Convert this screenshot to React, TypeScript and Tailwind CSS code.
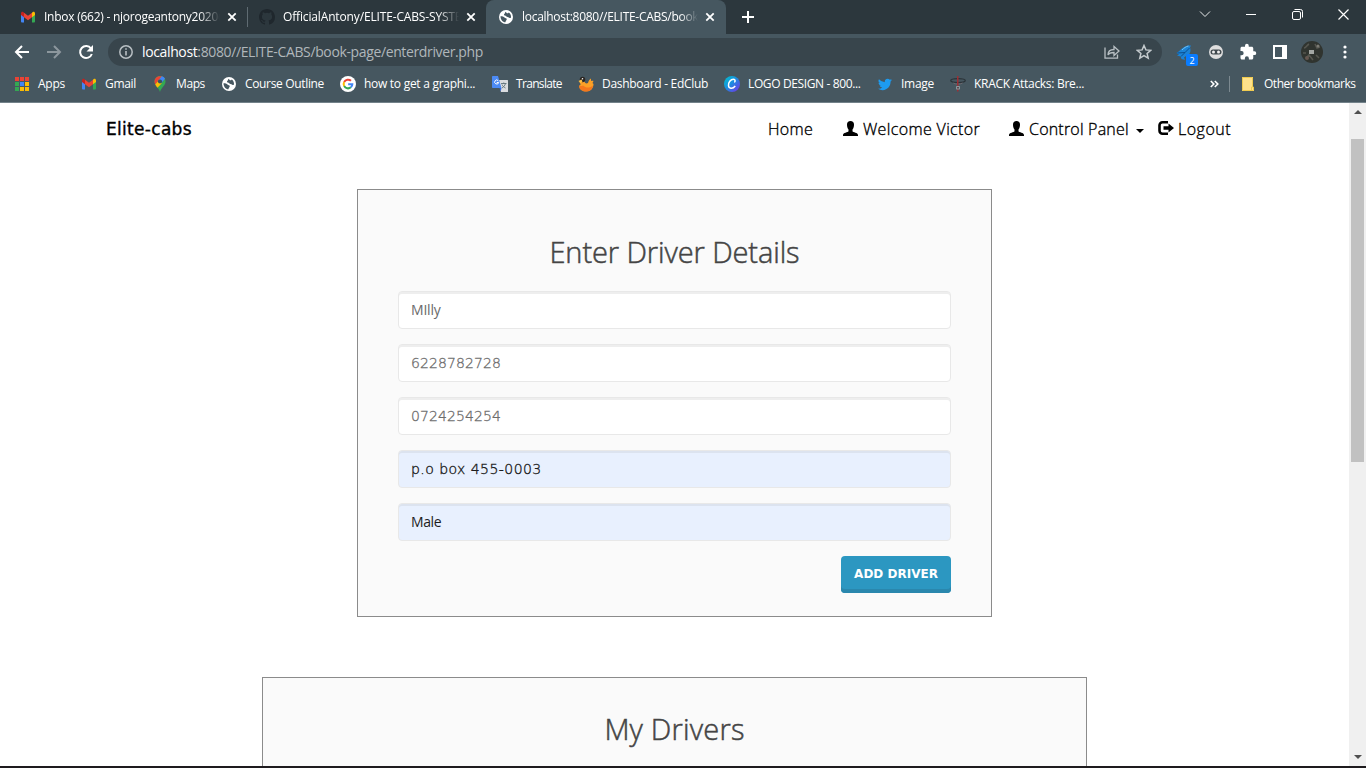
import type { ReactNode } from "react";

function GmailIcon() {
  return (
    <svg width="14" height="12" viewBox="0 0 28 22" className="shrink-0">
      <path d="M0 4v15.500C0 21 1 22 2.300 22H6V8z" fill="#4285f4" />
      <path d="M28 4v15.500c0 1.500-1 2.500-2.300 2.500H22V8z" fill="#34a853" />
      <path d="M6 2.500v9L14 17.500l8-6v-9l-8 6z" fill="#ea4335" />
      <path d="M0 4v3l6 4.500v-9L4.500 1.200C2.600-.3 0 1 0 4z" fill="#c5221f" />
      <path d="M28 4v3l-6 4.500v-9l1.500-1.300C25.400-.3 28 1 28 4z" fill="#fbbc04" />
    </svg>
  );
}

function GlobeIcon() {
  return (
    <svg width="14" height="14" viewBox="0 0 28 28" className="shrink-0">
      <circle cx="14" cy="14" r="14" fill="#fff" />
      <path d="M3 12.500c4 .2 6.500.5 8 2.500 1.500 1.800 4.500.8 4.500 3.500 0 2.200-2.500 2.500-2.500 6C7 24.500 3 19 3 12.500z" fill="#465760" />
      <path d="M13 3.500c-1 1.500-.5 3-2 4s-1.500 3 .5 3.500c3 .5 3 2.500 5.500 3s4 2.500 6.500 2c1.500-4-.5-9-4-11-1 1.500-2.500 2-3.500 1.500S14.500 4.500 13 3.500z" fill="#465760" />
    </svg>
  );
}

function GithubIcon() {
  return (
    <svg width="16" height="16" viewBox="0 0 16 16" className="shrink-0">
      <path fill="#1f272d" d="M8 0C3.580 0 0 3.580 0 8c0 3.540 2.290 6.530 5.470 7.590.4.070.55-.17.55-.38 0-.19-.01-.82-.01-1.490-2.010.37-2.530-.49-2.690-.94-.09-.23-.48-.94-.82-1.130-.28-.15-.68-.52-.01-.53.63-.01 1.080.58 1.230.82.72 1.210 1.870.87 2.330.66.07-.52.28-.87.51-1.070-1.780-.2-3.640-.89-3.640-3.950 0-.87.31-1.590.82-2.150-.08-.2-.36-1.020.08-2.120 0 0 .67-.21 2.200.82a7.600 7.600 0 0 1 4 0c1.530-1.040 2.200-.82 2.200-.82.44 1.100.16 1.920.08 2.120.51.56.82 1.270.82 2.150 0 3.070-1.870 3.750-3.650 3.950.29.25.54.73.54 1.480 0 1.070-.01 1.930-.01 2.200 0 .21.15.46.55.38A8.010 8.010 0 0 0 16 8c0-4.420-3.580-8-8-8z" />
    </svg>
  );
}

function CloseMark() {
  return (
    <svg width="10" height="10" viewBox="0 0 10 10" className="shrink-0">
      <path d="M1.300 1.300l7.400 7.400M8.700 1.300L1.300 8.700" stroke="#fff" strokeWidth="1.800" />
    </svg>
  );
}

function AppsIcon() {
  const colors = ["#ea4335", "#ea4335", "#ea4335", "#34a853", "#4285f4", "#fbbc04", "#34a853", "#fbbc04", "#fbbc04"];
  return (
    <svg width="14" height="14" viewBox="0 0 14 14" className="shrink-0">
      {colors.map((c, i) => (
        <rect key={i} x={(i % 3) * 5} y={Math.floor(i / 3) * 5} width="4" height="4" fill={c} />
      ))}
    </svg>
  );
}

function MapsIcon() {
  return (
    <svg width="12" height="16" viewBox="0 0 24 32" className="shrink-0">
      <path d="M12 0C5.500 0 1 5 1 11c0 9 8.500 11 11 21 2.500-10 11-12 11-21C23 5 18.500 0 12 0z" fill="#34a853" />
      <path d="M2.500 17L16 1C13 0 6.500-.5 3.500 4 0 8.500.5 13 2.500 17z" fill="#ea4335" />
      <path d="M2.500 17L8.500 9.500l7 5L7 23.500C5.500 21.500 3.500 19.500 2.500 17z" fill="#fbbc04" />
      <path d="M15.500 .6L8.500 9.500l6.500 4 7-8C20.500 3 18 1.200 15.500.6z" fill="#4285f4" />
      <circle cx="12" cy="11" r="4.200" fill="#3b5160" />
    </svg>
  );
}

function GoogleIcon() {
  return (
    <svg width="16" height="16" viewBox="0 0 48 48" className="shrink-0">
      <circle cx="24" cy="24" r="24" fill="#fff" />
      <g fill="none" strokeWidth="6">
        <path d="M33 14.500A13 13 0 0 0 12.500 18" stroke="#ea4335" />
        <path d="M12.500 18a13 13 0 0 0 0 12" stroke="#fbbc04" />
        <path d="M12.500 30A13 13 0 0 0 32.500 34" stroke="#34a853" />
        <path d="M32.500 34a13 13 0 0 0 4.500-9.500H24.500" stroke="#4285f4" />
      </g>
    </svg>
  );
}

function TranslateIcon() {
  return (
    <svg width="16" height="16" viewBox="0 0 32 32" className="shrink-0">
      <path d="M12 8h19a1 1 0 0 1 1 1v22a1 1 0 0 1-1 1H18z" fill="#dadce0" />
      <path d="M18 15h11M23.500 13v2M27 15c-1 4-4 7-7 9M20 17c1 3 4 6 7 7" stroke="#5f7078" strokeWidth="1.800" fill="none" />
      <path d="M1.500 0H12l7 24H1.500A1.500 1.500 0 0 1 0 22.500v-21A1.500 1.500 0 0 1 1.500 0z" fill="#4c8bf5" />
      <path d="M15 24h4l-1.500 7z" fill="#3367d6" />
      <path d="M12.500 9.500a4 4 0 1 0 .8 3.500H9.500" stroke="#fff" strokeWidth="2" fill="none" />
    </svg>
  );
}

function EdClubIcon() {
  return (
    <svg width="16" height="16" viewBox="0 0 32 32" className="shrink-0">
      <path d="M3 12c2-3 8-3 10-1 1 4 4 5 7 3 1-4 3-8 6-9l0 5c2-1 4-1 5 0l-2 4 2 2c0 9-6 15-14 15S2 27 2 19c2 0 3-1 3-3z" fill="#fba026" />
      <path d="M2 19c3 2 6 1 8 0 5 5 13 6 20 0-1 7-6 12-13 12S2 27 2 19z" fill="#f26a1b" opacity=".75" />
      <circle cx="9" cy="7" r="5.500" fill="#2a2522" />
      <path d="M1 10l6-3 2 4-4 3z" fill="#ffc042" />
      <circle cx="9" cy="5.500" r="1.500" fill="#fff" />
    </svg>
  );
}

function CanvaIcon() {
  return (
    <svg width="16" height="16" viewBox="0 0 32 32" className="shrink-0">
      <defs>
        <linearGradient id="canva" x1="0" y1="0" x2="1" y2="1">
          <stop offset="0" stopColor="#00c4cc" />
          <stop offset=".45" stopColor="#198fe0" />
          <stop offset="1" stopColor="#7d2ae8" />
        </linearGradient>
      </defs>
      <circle cx="16" cy="16" r="16" fill="url(#canva)" />
      <path d="M20.500 12.500c2.500-1 2.500-6-1.500-6C13 6.500 8.500 13 9 19c.5 6.500 8 8 13.500 1" stroke="#fff" strokeWidth="3" fill="none" />
    </svg>
  );
}

function TwitterIcon() {
  return (
    <svg width="14" height="13" viewBox="0 0 24 20" className="shrink-0">
      <path fill="#1d9bf0" d="M24 2.400a10 10 0 0 1-2.800.8A5 5 0 0 0 23.300.5a10 10 0 0 1-3.100 1.200A4.900 4.900 0 0 0 11.800 6.200 14 14 0 0 1 1.700 1a4.900 4.900 0 0 0 1.500 6.600 5 5 0 0 1-2.200-.6c0 2.300 1.600 4.300 3.900 4.800a5 5 0 0 1-2.200.1 4.900 4.900 0 0 0 4.600 3.400A10 10 0 0 1 0 17.300a14 14 0 0 0 21.500-12.400A10 10 0 0 0 24 2.400z" />
    </svg>
  );
}

function KrackIcon() {
  return (
    <svg width="16" height="16" viewBox="0 0 32 32" className="shrink-0">
      <ellipse cx="16" cy="9" rx="14.500" ry="4" stroke="#2b3338" strokeWidth="2.500" fill="none" />
      <path d="M7 14c5 3 13 3 18 0" stroke="#6e6a70" strokeWidth="2" fill="none" />
      <path d="M15.500 0v31" stroke="#9b2f35" strokeWidth="3" />
      <rect x="12" y="20" width="8" height="7" rx="1.500" fill="#8d979c" />
      <rect x="14.500" y="22" width="3" height="3" fill="#4a3538" />
    </svg>
  );
}

function TabLabel({ children, className }: { children: ReactNode; className: string }) {
  return (
    <div className={`h-[20px] overflow-hidden whitespace-nowrap text-[12px] leading-[20px] text-white ${className}`}>
      {children}
    </div>
  );
}

function TabStrip() {
  return (
    <div className="flex h-[34px] shrink-0 bg-[#2c373d]">
      <div className="flex w-[247px] items-center pl-[21px]">
        <GmailIcon />
        <TabLabel className="ml-[9px] w-[176px] tracking-[-0.25px] [mask-image:linear-gradient(to_right,black_88%,transparent)]">Inbox (662) - njorogeantony2020@</TabLabel>
        <div className="ml-[7px]"><CloseMark /></div>
      </div>
      <div className="mt-[7px] h-[20px] w-px bg-[#5f6b72]" />
      <div className="flex w-[238px] items-center pl-[11px]">
        <GithubIcon />
        <TabLabel className="ml-[8px] w-[176px] tracking-[-0.15px] [mask-image:linear-gradient(to_right,black_88%,transparent)]">OfficialAntony/ELITE-CABS-SYSTEM</TabLabel>
        <div className="ml-[7px]"><CloseMark /></div>
      </div>
      <div className="flex w-[240px] items-center rounded-t-[8px] bg-[#465760] pl-[13px]">
        <GlobeIcon />
        <TabLabel className="ml-[9px] w-[176px] tracking-[-0.28px] [mask-image:linear-gradient(to_right,black_90%,transparent)]">localhost:8080//ELITE-CABS/book-page</TabLabel>
        <div className="ml-[7px]"><CloseMark /></div>
      </div>
      <div className="flex flex-1 items-center pl-[16px]">
        <svg width="12" height="12" viewBox="0 0 12 12"><path d="M6 0v12M0 6h12" stroke="#fff" strokeWidth="2" /></svg>
      </div>
      <div className="flex h-[28px] items-center">
        <div className="flex w-[46px] justify-center"><svg width="12" height="8" viewBox="0 0 12 8"><path d="M1 1.500l5 5 5-5" stroke="#e8eaeb" fill="none" /></svg></div>
        <div className="flex w-[46px] justify-center"><svg width="10" height="1"><path d="M0 .5h10" stroke="#fff" /></svg></div>
        <div className="flex w-[46px] justify-center">
          <svg width="11" height="11" viewBox="0 0 11 11" fill="none" stroke="#fff"><rect x=".5" y="2.500" width="8" height="8" rx="1.500" /><path d="M2.500 .5h6a2 2 0 0 1 2 2v6" /></svg>
        </div>
        <div className="flex w-[46px] justify-center"><svg width="11" height="11" viewBox="0 0 11 11"><path d="M.5.5l10 10M10.500.5l-10 10" stroke="#fff" strokeWidth="1.200" /></svg></div>
      </div>
    </div>
  );
}

function Toolbar() {
  return (
    <div className="flex h-[36px] shrink-0 items-center bg-[#465760]">
      <svg width="108" height="28" viewBox="0 0 108 28" fill="none" strokeWidth="2" className="shrink-0">
        <path d="M29 14H16.500M22 8l-6 6 6 6" stroke="#fff" />
        <path d="M47 14h12.500M54 8l6 6-6 6" stroke="#8c979d" />
        <path d="M91 10.500a6 6 0 1 0 .8 5.500" stroke="#fff" />
        <path d="M93 7v6.500h-6.500z" fill="#fff" />
      </svg>
      <div className="flex h-[28px] w-[1054px] shrink-0 items-center rounded-full bg-[#38454c] pl-[11px]">
        <svg width="14" height="14" viewBox="0 0 14 14" className="shrink-0">
          <circle cx="7" cy="7" r="6.200" fill="none" stroke="#b8bfc3" strokeWidth="1.500" />
          <path d="M7 6v4.500M7 3.300v1.500" stroke="#b8bfc3" strokeWidth="1.600" />
        </svg>
        <div className="ml-[9px] flex-1 whitespace-nowrap text-[14px] leading-[20px] tracking-[-0.37px] text-[#b0b7bb]">
          <span className="text-white">localhost</span>:8080//ELITE-CABS/book-page/enterdriver.php
        </div>
        <svg width="16" height="14" viewBox="0 0 16 14" fill="none" stroke="#b8bfc3" strokeWidth="1.300">
          <path d="M1 2.500v10.700h12.500V9.500" />
          <path d="M4 10c0-4 2.500-5.500 6-5.500V1.500l5 4.500-5 4.500V7.500C7 7.500 5 8 4 10z" />
        </svg>
        <svg width="16" height="16" viewBox="0 0 16 16" className="mr-[10px] ml-[16px]" fill="none" stroke="#c5cbce" strokeWidth="1.500">
          <path d="M8 1.500l1.900 4.400 4.800.4-3.600 3.200 1.100 4.700L8 11.700l-4.200 2.500 1.100-4.700L1.300 6.300l4.800-.4z" />
        </svg>
      </div>
      <div className="flex flex-1 items-center">
        <div className="relative ml-[14px] h-[20px] w-[24px] shrink-0">
          <svg width="16" height="16" viewBox="0 0 32 32" className="mt-[3px]">
            <path d="M1 16C8 12 12 4 24 1l6 0-2 4c3 8-1 15-8 17l-4 3 2 5-7-2-2-5-7-2 4-2z" fill="#1b83d6" />
            <path d="M3 16l15-1 9-9M10 23l8-8" stroke="#0b4f91" strokeWidth="2" fill="none" />
            <path d="M12 10c4-4 8-7 13-8" stroke="#75c3f4" strokeWidth="2" fill="none" />
          </svg>
          <span className="absolute top-[12px] left-[10px] flex h-[12px] w-[12px] items-center justify-center rounded-[2px] bg-[#0a7cff] text-[9px] leading-none text-white">2</span>
        </div>
        <svg width="14" height="14" viewBox="0 0 14 14" className="ml-[9px] shrink-0">
          <circle cx="7" cy="7" r="7" fill="#dedede" />
          <rect x="1.500" y="4.500" width="11" height="5" rx="2.500" fill="#414a4f" />
          <circle cx="4.500" cy="7" r="1.500" fill="#eee" /><circle cx="9.500" cy="7" r="1.500" fill="#eee" />
        </svg>
        <svg width="18" height="18" viewBox="0 0 24 24" className="ml-[16px] shrink-0">
          <path fill="#fff" d="M20.500 11H19V7c0-1.100-.9-2-2-2h-4V3.500a2.500 2.500 0 0 0-5 0V5H4c-1.100 0-2 .9-2 2v3.800h1.500a2.700 2.700 0 0 1 0 5.400H2V20c0 1.100.9 2 2 2h3.800v-1.500a2.700 2.700 0 0 1 5.400 0V22H17c1.100 0 2-.9 2-2v-4h1.500a2.500 2.500 0 0 0 0-5z" />
        </svg>
        <svg width="14" height="14" className="ml-[16px] shrink-0"><rect width="14" height="14" fill="#fff" /><rect x="2" y="2" width="7" height="10" fill="#465760" /></svg>
        <svg width="22" height="22" viewBox="0 0 22 22" className="ml-[14px] shrink-0">
          <circle cx="11" cy="11" r="11" fill="#30342f" />
          <path d="M3 7c2 0 3-3 5-4M14 3l2 4 3-1M5 17l3-3 4 5M15 14l3 3M2 12h3" stroke="#55564f" strokeWidth="1.600" fill="none" />
          <circle cx="6" cy="17" r="2" fill="#655750" /><circle cx="17" cy="5" r="1.500" fill="#7c7b74" />
          <rect x="8" y="9" width="5" height="4" fill="#a3a7a3" />
        </svg>
        <svg width="4" height="14" viewBox="0 0 4 14" className="ml-[20px] shrink-0" fill="#fff"><circle cx="2" cy="2" r="1.600" /><circle cx="2" cy="7" r="1.600" /><circle cx="2" cy="12" r="1.600" /></svg>
      </div>
    </div>
  );
}

function Bookmark({ icon, label, className, textClass }: { icon: ReactNode; label: string; className: string; textClass: string }) {
  return (
    <div className={`flex shrink-0 items-center ${className}`}>
      {icon}
      <span className={`whitespace-nowrap ${textClass}`}>{label}</span>
    </div>
  );
}

function BookmarksBar() {
  return (
    <div className="flex h-[33px] shrink-0 items-center border-b border-[#73828a] bg-[#465760] pb-[4px] text-[12px] leading-[20px] text-white">
      <Bookmark icon={<AppsIcon />} label="Apps" className="w-[67px] ml-[15px]" textClass="ml-[9px] tracking-[-0.25px]" />
      <Bookmark icon={<GmailIcon />} label="Gmail" className="w-[72px]" textClass="ml-[9px] tracking-[-0.3px]" />
      <Bookmark icon={<MapsIcon />} label="Maps" className="w-[68px]" textClass="ml-[10px] tracking-[-0.4px]" />
      <Bookmark icon={<GlobeIcon />} label="Course Outline" className="w-[118px]" textClass="ml-[9px] tracking-[-0.34px]" />
      <Bookmark icon={<GoogleIcon />} label="how to get a graphi..." className="w-[152px]" textClass="ml-[8px] tracking-[-0.28px]" />
      <Bookmark icon={<TranslateIcon />} label="Translate" className="w-[86px]" textClass="ml-[8px] tracking-[-0.67px]" />
      <Bookmark icon={<EdClubIcon />} label="Dashboard - EdClub" className="w-[146px]" textClass="ml-[8px] tracking-[-0.29px]" />
      <Bookmark icon={<CanvaIcon />} label="LOGO DESIGN - 800..." className="w-[154px]" textClass="ml-[8px] tracking-[-0.37px]" />
      <Bookmark icon={<TwitterIcon />} label="Image" className="w-[72px]" textClass="ml-[9px] tracking-[-0.28px]" />
      <Bookmark icon={<KrackIcon />} label="KRACK Attacks: Bre..." className="flex-1" textClass="ml-[8px] tracking-[-0.28px]" />
      <svg width="9" height="8" viewBox="0 0 9 8" className="mr-[9px]"><path d="M.8 1l3 3-3 3M4.800 1l3 3-3 3" stroke="#fff" strokeWidth="1.600" fill="none" /></svg>
      <div className="mx-[1px] h-[16px] w-px bg-[#7c8990]" />
      <svg width="12" height="14" viewBox="0 0 12 14" className="ml-[11px]"><path d="M0 0h11v10h1v4H0z" fill="#ffe28b" /><path d="M.5.500h10v9.500M.5 0v13.500H11.500V10h-2v3.500" stroke="#f0cb4f" fill="none" /></svg>
      <span className="ml-[10px] w-[102px] whitespace-nowrap tracking-[-0.46px]">Other bookmarks</span>
    </div>
  );
}

function UserIcon() {
  return (
    <svg width="15" height="15" viewBox="0 0 15 15" className="mb-[2px] shrink-0">
      <path d="M7.500 0C5.300 0 4 1.300 4 3.500c0 2 .4 3.700 1.500 5v1.700C5 11.500 0 11.500 0 14v1h15v-1c0-2.500-5-2.500-5.500-3.800V8.500c1.100-1.300 1.500-3 1.500-5C11 1.300 9.700 0 7.500 0z" />
    </svg>
  );
}

function LogoutIcon() {
  return (
    <svg width="16" height="14" viewBox="0 0 16 14" className="mb-[2px] shrink-0">
      <path d="M10 1.300H4.500A3 3 0 0 0 1.500 4.300v5.400a3 3 0 0 0 3 3H10" fill="none" stroke="#000" strokeWidth="2.600" />
      <path d="M5.500 5.300h5V2.500L16 7l-5.500 4.500V8.700h-5z" />
    </svg>
  );
}

function SiteNav() {
  return (
    <nav className="flex h-[52px] shrink-0 items-center text-[16px] leading-[24px] font-light text-black [-webkit-text-stroke:0.35px_black]">
      <span className="ml-[106px] w-[662px] font-['DejaVu_Sans'] text-[17px] font-normal tracking-[0.3px]">Elite-cabs</span>
      <span className="w-[75px] tracking-[0.35px]">Home</span>
      <span className="flex w-[166px] items-center gap-[5px]"><UserIcon /><span className="whitespace-nowrap tracking-[0.35px]">Welcome Victor</span></span>
      <span className="flex w-[149px] items-center gap-[5px]">
        <UserIcon />
        <span className="whitespace-nowrap tracking-[0.2px]">Control Panel</span>
        <svg width="8" height="4" viewBox="0 0 8 4" className="mt-[3px] ml-[2px]"><path d="M0 0h8L4 4z" /></svg>
      </span>
      <span className="flex items-center gap-[4px]"><LogoutIcon /><span className="tracking-[0.5px]">Logout</span></span>
    </nav>
  );
}

function Field({ value, filled = false, className }: { value: string; filled?: boolean; className: string }) {
  return (
    <div className={`flex h-[38px] items-center rounded-[4px] border border-[#e8e8e8] pl-[12px] text-[14px] ${filled ? "bg-[#e8f0fe] text-[#1c1c1c] shadow-[inset_0_2px_0_#dce3ef]" : "bg-white text-[#6b6b6b] shadow-[inset_0_2px_0_#eeeeee]"} ${className}`}>
      {value}
    </div>
  );
}

function Page() {
  return (
    <div className="flex min-w-0 flex-1 flex-col overflow-hidden bg-white">
      <SiteNav />
      <section className="mt-[34px] ml-[357px] flex h-[428px] w-[635px] shrink-0 flex-col border border-[#8b8b8b] bg-[#fafafa] px-[40px] pt-[41px]">
        <h1 className="h-[40px] text-center text-[29px] leading-[42px] font-light whitespace-nowrap text-[#444] tracking-[-0.1px] [-webkit-text-stroke:0.5px_#444]">Enter Driver Details</h1>
        <div className="mt-[20px] flex flex-col gap-[15px]">
          <Field value="MIlly" className="pb-[2px] tracking-[-0.2px]" />
          <Field value="6228782728" className="font-['DejaVu_Sans'] font-extralight tracking-[0.1px] [-webkit-text-stroke:0.3px_#6b6b6b]" />
          <Field value="0724254254" className="font-['DejaVu_Sans'] font-extralight tracking-[0.1px] [-webkit-text-stroke:0.3px_#6b6b6b]" />
          <Field value="p.o box 455-0003" filled className="font-['DejaVu_Sans'] font-extralight tracking-[0.45px] [-webkit-text-stroke:0.35px_#1c1c1c]" />
          <Field value="Male" filled className="pb-[2px] tracking-[-0.4px]" />
        </div>
        <button className="mt-[15px] h-[37px] w-[110px] self-end rounded-[4px] bg-[#2c97c1] pb-[2px] font-['DejaVu_Sans'] text-[12px] font-bold whitespace-nowrap text-white shadow-[inset_0_-4px_0_#2a87ad]">ADD DRIVER</button>
      </section>
      <section className="mt-[60px] ml-[262px] h-[120px] w-[825px] shrink-0 border border-[#8b8b8b] bg-[#fafafa] pt-[31px]">
        <h1 className="text-center text-[29px] leading-[40px] font-light text-[#444] tracking-[0.2px] [-webkit-text-stroke:0.5px_#444]">My Drivers</h1>
      </section>
    </div>
  );
}

function Scrollbar() {
  return (
    <div className="flex w-[17px] shrink-0 flex-col items-center bg-[#f0f0f0]">
      <svg width="8" height="4" viewBox="0 0 8 4" className="mt-[7px]"><path d="M0 4h8L4 0z" fill="#505050" /></svg>
      <div className="mt-[25px] h-[323px] w-[13px] bg-[#c1c1c1]" />
      <svg width="8" height="4" viewBox="0 0 8 4" className="mt-auto mb-[7px]"><path d="M0 0h8L4 4z" fill="#505050" /></svg>
    </div>
  );
}

export default function App() {
  return (
    <div className="flex h-[768px] w-[1366px] flex-col overflow-hidden bg-white font-['Open_Sans',sans-serif]">
      <TabStrip />
      <Toolbar />
      <BookmarksBar />
      <div className="flex min-h-0 flex-1">
        <Page />
        <Scrollbar />
      </div>
      <div className="h-[2px] shrink-0 bg-[#1e1b1e]" />
    </div>
  );
}
